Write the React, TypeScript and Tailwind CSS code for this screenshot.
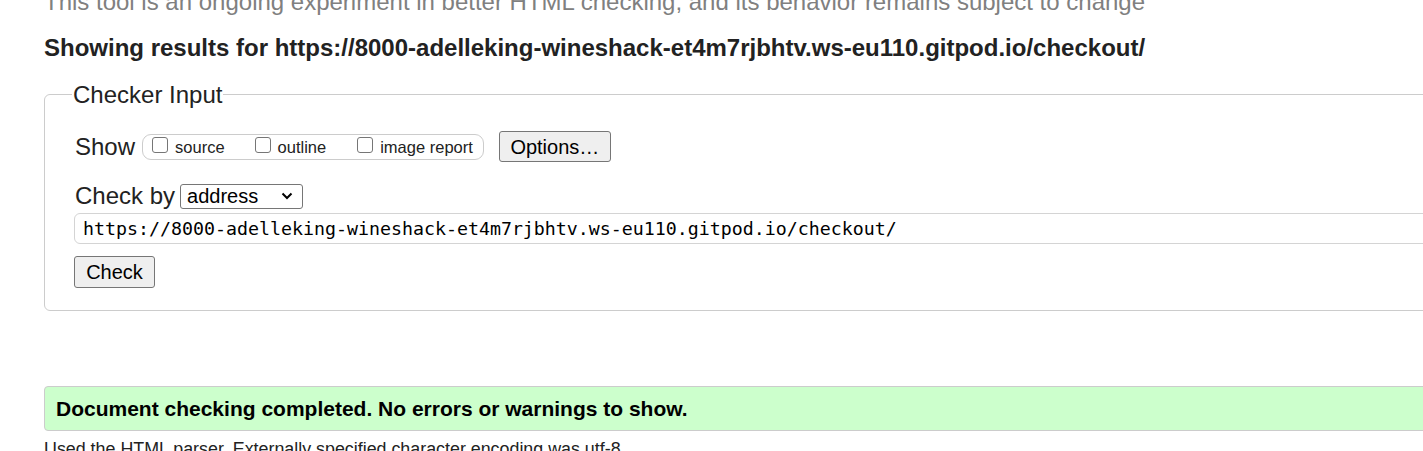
import React from "react";

function Box({ label }: { label: string }) {
  return (
    <span className="flex items-center">
      <span className="inline-block w-[16px] h-[16px] border border-[#767676] rounded-[3px] bg-white -mt-[4px]" />
      <span className="ml-[7px] text-[16.5px] leading-[20px] text-[#222]">{label}</span>
    </span>
  );
}

export default function App() {
  return (
    <div
      className="w-[1423px] h-[451px] overflow-hidden bg-white text-[#222]"
      style={{ fontFamily: '"Liberation Sans", Arial, sans-serif' }}
    >
      <div className="pl-[44px] w-[1500px]">
        <p className="-mt-[12px] text-[24px] leading-[28px] text-[#808080] whitespace-nowrap">
          This tool is an ongoing experiment in better HTML checking, and its behavior remains subject to change
        </p>
        <h2 className="mt-[18px] text-[24px] leading-[28px] font-bold text-[#222] whitespace-nowrap">
          Showing results for https://8000-adelleking-wineshack-et4m7rjbhtv.ws-eu110.gitpod.io/checkout/
        </h2>
        <fieldset className="mt-[19px] border border-[#cccccc] rounded-[6px] pl-[30px] pr-[30px] pb-[22px]">
          <legend className="-ml-[3px] px-[1px] text-[24px] leading-[27px] text-[#222]">Checker Input</legend>
          <div className="mt-[23px] flex items-center">
            <span className="text-[24px] leading-[28px]">Show</span>
            <div className="ml-[7px] h-[26px] border border-[#cccccc] rounded-[9px] flex items-center pl-[9px] pr-[10px]">
              <Box label="source" />
              <span className="w-[30px]" />
              <Box label="outline" />
              <span className="w-[31px]" />
              <Box label="image report" />
            </div>
            <button className="ml-[15px] w-[112px] h-[31px] bg-[#efefef] border border-[#767676] rounded-[3px] text-[20px] leading-[24px] text-black">
              Options…
            </button>
          </div>
          <div className="mt-[20px] flex items-center">
            <span className="text-[24px] leading-[28px]">Check by</span>
            <div className="ml-[5px] w-[123px] h-[25px] border border-[#767676] rounded-[3px] flex items-center justify-between pl-[6px] pr-[9px] bg-white">
              <span className="text-[20px] leading-[22px] text-black">address</span>
              <svg width="12" height="8" viewBox="0 0 12 8">
                <path d="M1.5 1.5 L6 6 L10.5 1.5" fill="none" stroke="#000" strokeWidth="2" />
              </svg>
            </div>
          </div>
          <div className="mt-[3px] h-[31px] border border-[#d4d4d4] rounded-[6px] flex items-center pl-[8px] -ml-[1px]">
            <span
              className="text-[18.27px] text-black whitespace-nowrap"
              style={{ fontFamily: '"DejaVu Sans Mono", "Liberation Mono", monospace' }}
            >
              https://8000-adelleking-wineshack-et4m7rjbhtv.ws-eu110.gitpod.io/checkout/
            </span>
          </div>
          <button className="block mt-[12px] -ml-[1px] w-[81px] h-[32px] bg-[#efefef] border border-[#767676] rounded-[3px] text-[20px] leading-[24px] text-black">
            Check
          </button>
        </fieldset>
        <div className="mt-[75px] h-[45px] bg-[#ccffcc] border border-[#cccccc] rounded-[4px] flex items-center pl-[11px]">
          <span className="text-[21px] font-bold text-black">Document checking completed. No errors or warnings to show.</span>
        </div>
        <p className="mt-[7px] text-[17.85px] leading-[22px] text-[#222] whitespace-nowrap">
          Used the HTML parser. Externally specified character encoding was utf-8.
        </p>
      </div>
    </div>
  );
}
